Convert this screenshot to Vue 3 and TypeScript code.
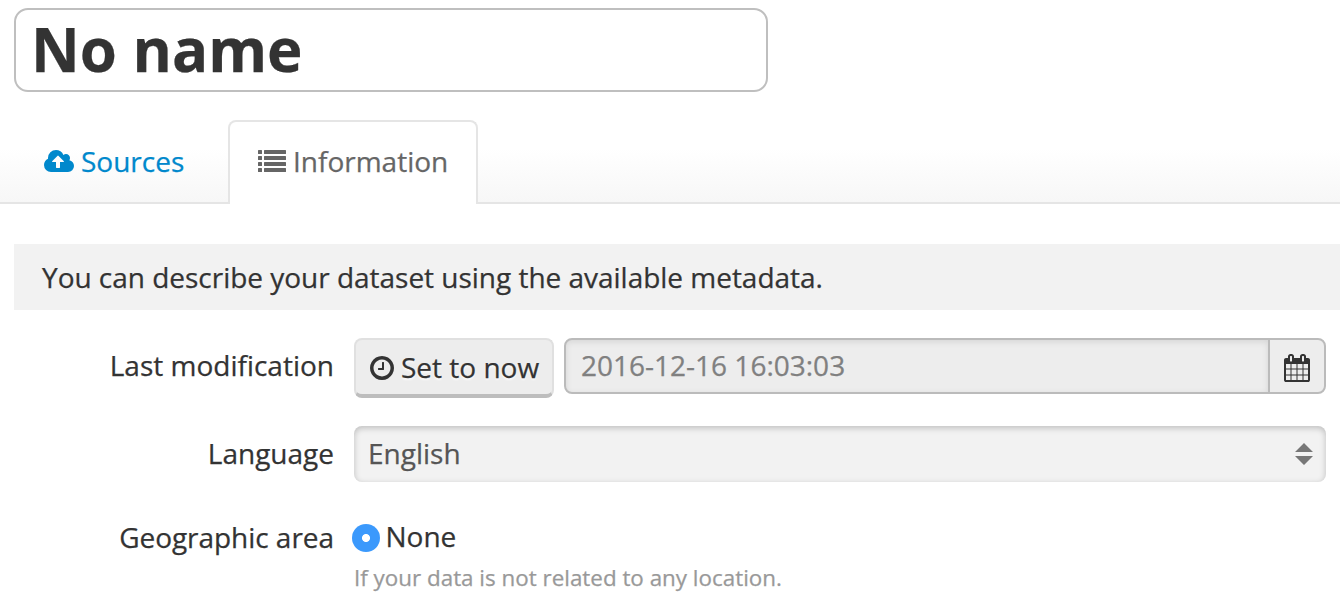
<script setup lang="ts">
import { ref } from 'vue'

const title = ref('No name')
const modified = ref('2016-12-16 16:03:03')
const language = ref('English')
</script>

<template>
  <main class="page">
    <h1 class="title">{{ title }}</h1>

    <nav class="tabs">
      <a class="tab">
        <svg class="icon" width="30" height="22" viewBox="64 128 1920 1408"><path fill="currentColor" d="M1344 864q0-14-9-23l-352-352q-9-9-23-9t-23 9l-351 351q-10 12-10 24 0 14 9 23t23 9h224v352q0 13 9.5 22.5t22.5 9.5h192q13 0 22.5-9.5t9.5-22.5v-352h224q13 0 22.5-9.5t9.5-22.5zm640 288q0 159-112.5 271.5t-271.5 112.5h-1088q-185 0-316.5-131.5t-131.5-316.5q0-130 70-240t188-165q-2-30-2-43 0-212 150-362t362-150q156 0 285.5 87t188.5 231q71-62 166-62 106 0 181 75t75 181q0 76-41 138 130 31 213.5 135.5t83.5 238.5z" /></svg>
        <span>Sources</span>
      </a>
      <a class="tab active">
        <svg class="icon" width="28" height="22" viewBox="0 0 28 22" fill="currentColor">
          <template v-for="n in 4" :key="n">
            <rect x="0" :y="(n - 1) * 6" width="4" height="4" rx=".5" />
            <rect x="6" :y="(n - 1) * 6" width="22" height="4" rx=".5" />
          </template>
        </svg>
        <span>Information</span>
      </a>
    </nav>

    <p class="notice">You can describe your dataset using the available metadata.</p>

    <form class="form" @submit.prevent>
      <div class="row modification">
        <label class="label">Last modification</label>
        <button class="now" type="button">
          <svg class="icon" width="24" height="24" viewBox="128 128 1536 1536"><path fill="currentColor" d="M1024 544v448q0 14-9 23t-23 9h-320q-14 0-23-9t-9-23v-64q0-14 9-23t23-9h224v-352q0-14 9-23t23-9h64q14 0 23 9t9 23zm416 352q0-148-73-273t-198-198-273-73-273 73-198 198-73 273 73 273 198 198 273 73 273-73 198-198 73-273zm224 0q0 209-103 385.5t-279.500 279.500-385.500 103-385.500-103-279.500-279.500-103-385.500 103-385.500 279.500-279.500 385.500-103 385.500 103 279.500 279.500 103 385.500z" /></svg>
          <span>Set to now</span>
        </button>
        <div class="date">
          <span class="value">{{ modified }}</span>
          <span class="addon">
            <svg class="icon" width="26" height="28" viewBox="64 0 1664 1792"><path fill="currentColor" d="M192 1664h288v-288h-288v288zm352 0h320v-288h-320v288zm-352-352h288v-320h-288v320zm352 0h320v-320h-320v320zm-352-384h288v-288h-288v288zm736 736h320v-288h-320v288zm-384-736h320v-288h-320v288zm768 736h288v-288h-288v288zm-384-352h320v-320h-320v320zm-352-864v-288q0-13-9.500-22.500t-22.500-9.500h-64q-13 0-22.500 9.500t-9.500 22.500v288q0 13 9.500 22.500t22.500 9.500h64q13 0 22.500-9.500t9.500-22.500zm736 864h288v-320h-288v320zm-384-384h320v-288h-320v288zm384 0h288v-288h-288v288zm32-480v-288q0-13-9.500-22.500t-22.500-9.500h-64q-13 0-22.500 9.500t-9.500 22.500v288q0 13 9.500 22.500t22.500 9.500h64q13 0 22.500-9.500t9.500-22.500zm384-64v1280q0 52-38 90t-90 38h-1408q-52 0-90-38t-38-90v-1280q0-52 38-90t90-38h128v-96q0-66 47-113t113-47h64q66 0 113 47t47 113v96h384v-96q0-66 47-113t113-47h64q66 0 113 47t47 113v96h128q52 0 90 38t38 90z" /></svg>
          </span>
        </div>
      </div>

      <div class="row">
        <label class="label">Language</label>
        <div class="select">
          <span>{{ language }}</span>
          <svg width="18" height="22" viewBox="0 0 18 22" fill="#777"><path d="M9 0L18 9H0zM0 13H18L9 22z" /></svg>
        </div>
      </div>

      <div class="row area">
        <label class="label">Geographic area</label>
        <div class="options">
          <div class="option"><span class="radio"></span><span>None</span></div>
          <p class="hint">If your data is not related to any location.</p>
        </div>
      </div>
    </form>
  </main>
</template>

<style>
html, body { background: #fff; overflow: hidden; }
</style>

<style scoped>
.page {
  box-sizing: border-box;
  width: 1340px;
  height: 600px;
  padding-top: 8px;
  overflow: hidden;
  font: 28px/40px "Open Sans", "Noto Sans", sans-serif;
  color: #333;
  -webkit-text-stroke: .25px currentColor;
}
.icon { display: block; flex: none; }
.title {
  box-sizing: border-box;
  width: 754px;
  height: 84px;
  margin: 0 0 28px 14px;
  padding-left: 15px;
  border: 2px solid #bfbfbf;
  border-radius: 14px;
  font-size: 60px;
  font-weight: 700;
  line-height: 78px;
}
.tabs {
  display: flex;
  height: 84px;
  box-sizing: border-box;
  border-bottom: 2px solid #e5e5e5;
  background: linear-gradient(#fff 35%, #f7f7f7);
}
.tab {
  display: flex;
  align-items: center;
  gap: 7px;
  box-sizing: border-box;
  width: 228px;
  height: 82px;
  padding-left: 44px;
  color: #0088cc;
}
.tab.active {
  width: 250px;
  height: 84px;
  padding: 0 0 4px 28px;
  border: 2px solid #e5e5e5;
  border-bottom: 0;
  border-radius: 8px 8px 0 0;
  background: #fff;
  color: #666;
}
.notice {
  height: 66px;
  margin: 40px 0 28px 14px;
  padding-left: 28px;
  background: #f2f2f2;
  line-height: 67px;
  letter-spacing: -.02px;
}
.row { display: flex; height: 56px; margin-bottom: 32px; }
.label { width: 334px; margin-right: 20px; text-align: right; line-height: 55px; }
.now {
  display: flex;
  align-items: center;
  gap: 7px;
  box-sizing: border-box;
  width: 200px;
  height: 60px;
  padding: 2px 0 0 14px;
  margin: 0 10px 0 0;
  border: 2px solid #e0e0e0;
  border-bottom: 4px solid #bdbdbd;
  border-radius: 8px;
  background: #ededed;
  color: #333;
  font: inherit;
  text-shadow: 0 2px 2px rgba(255, 255, 255, .75);
}
.now span { margin-top: -3px; }
.date {
  display: flex;
  box-sizing: border-box;
  width: 762px;
  border: 2px solid #bbb;
  border-radius: 8px;
  background: #ededed;
  overflow: hidden;
}
.value {
  flex: 1;
  padding-left: 15px;
  box-shadow: inset 0 2px 6px rgba(0, 0, 0, .1);
  color: #808080;
  line-height: 51px;
}
.addon {
  display: flex;
  justify-content: center;
  box-sizing: border-box;
  width: 56px;
  padding-top: 14px;
  border-left: 2px solid #bbb;
}
.select {
  display: flex;
  align-items: center;
  justify-content: space-between;
  box-sizing: border-box;
  width: 972px;
  padding: 0 13px 0 14px;
  border-radius: 8px;
  background: #f2f2f2;
  box-shadow: inset 0 2px 6px rgba(0, 0, 0, .22);
  color: #555;
}
.select span { margin-top: -2px; }
.area .label { line-height: 46px; letter-spacing: -.04px; }
.options { margin-left: -2px; }
.option { display: flex; height: 47px; gap: 5.5px; line-height: 44px; }
.radio {
  box-sizing: border-box;
  width: 28px;
  height: 28px;
  margin-top: 10px;
  border-radius: 50%;
  background: radial-gradient(circle, #fff 3.6px, #3b99fc 4.4px);
}
.hint { margin: 0 0 0 2px; color: #999; font-size: 22.4px; line-height: 34px; }
</style>
